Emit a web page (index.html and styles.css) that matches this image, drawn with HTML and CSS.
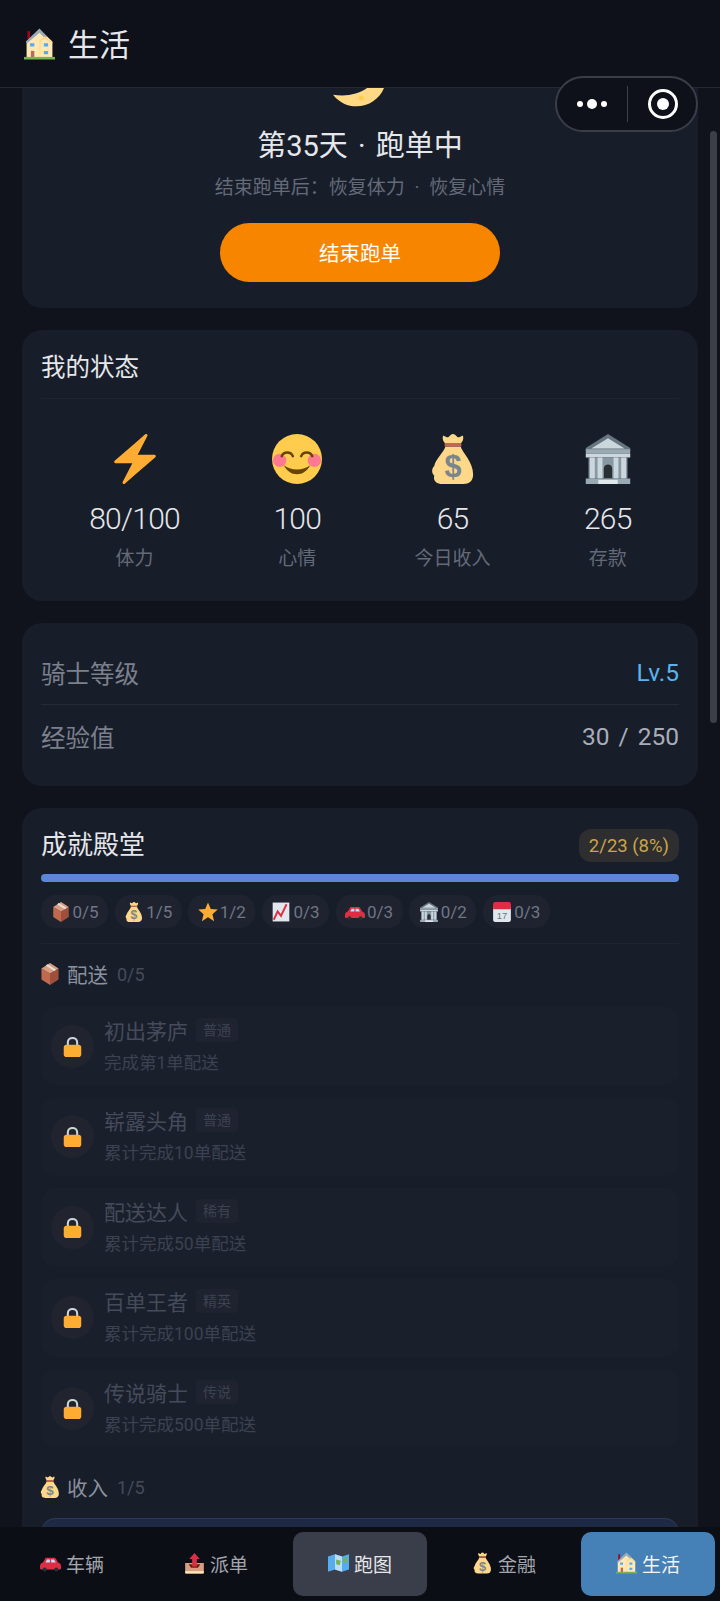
FILE: index.html
```html
<!DOCTYPE html>
<html lang="zh-CN">
<head>
    <meta charset="UTF-8">
    <title>生活</title>
    <link rel="stylesheet" href="styles.css">
</head>
<body>
    <svg class="sprites" xmlns="http://www.w3.org/2000/svg">
        <symbol id="e-house" viewBox="0 0 36 36">
            <path fill="#a0041e" d="M4 3h3v10H4z"/>
            <path fill="#ffe8b6" d="M3 34V15L18 1l15 14v19z"/>
            <path fill="#99aab5" d="M18 0L2 15.500l1.500 1.500L18 5l6 6 3-1z"/>
            <path fill="#ffd983" d="M18 14l6-5 9 7v1.500l-9-5.500-5 4v18h-1z"/>
            <path fill="#55acee" d="M7 17h5v4H7zM23 17h5v4h-5zM23 26h5v4h-5z"/>
            <path fill="#c1694f" d="M8 26h4v8H8z"/>
            <path fill="#77b255" d="M0 33h36v3H0z"/>
        </symbol>
        <symbol id="e-bolt" viewBox="0 0 36 36">
            <path fill="#ffac33" d="M32.938 15.651C32.792 15.260 32.418 15 32 15H19.925L26.891 1.458c.219-.426.106-.947-.271-1.243C26.437.071 26.218 0 26 0c-.233 0-.466.082-.653.243L18 6.588 3.347 19.243c-.316.273-.43.714-.284 1.105S3.582 21 4 21h12.075L9.109 34.542c-.219.426-.106.947.271 1.243.182.144.401.215.62.215.233 0 .466-.082.653-.243L18 29.412l14.653-12.655c.317-.273.43-.714.285-1.106z"/>
        </symbol>
        <symbol id="e-smile" viewBox="0 0 36 36">
            <circle fill="#ffcc4d" cx="18" cy="18" r="18"/>
            <circle fill="#ff7892" cx="5.500" cy="19" r="4.800"/>
            <circle fill="#ff7892" cx="30.500" cy="19" r="4.800"/>
            <path fill="none" stroke="#664500" stroke-width="1.800" stroke-linecap="round" d="M7 16c1.500-3.500 6.500-3.500 8 0M21 16c1.500-3.500 6.500-3.500 8 0"/>
            <path fill="#664500" d="M8.500 22.500c2 4 5.500 6.500 9.500 6.500s7.500-2.500 9.500-6.500c-2.500 2-5.500 3-9.500 3s-7-1-9.500-3z"/>
        </symbol>
        <symbol id="e-bag" viewBox="0 0 36 36">
            <path fill="#fdd888" d="M12.500 9h11c1 4 9 11 9 20 0 5-3 7-7 7h-15c-4 0-7-2-6-6-2-2-2-5 0-7 1-5 7-10 8-14z"/>
            <path fill="#fdd888" d="M11 1c2 1 3 2 4 1s2-2 3-2 2 1 3 2 2 0 4-1c1 2 0 5-2 6H13c-2-1-3-4-2-6z"/>
            <path fill="#bf6952" d="M12 6.500h12v2.500H12z"/>
            <text class="bag-sign" x="18" y="31" text-anchor="middle">$</text>
        </symbol>
        <symbol id="e-bank" viewBox="0 0 36 36">
            <path fill="#66757f" d="M18 0L2 10v2h32v-2z"/>
            <path fill="#ccd6dd" d="M18 3L6 10.500h24z"/>
            <path fill="#99aab5" d="M2 11h32v3H2z"/>
            <path fill="#ccd6dd" d="M2 14h32v3H2z"/>
            <path fill="#8899a6" d="M4 17h28v15H4z"/>
            <path fill="#ccd6dd" d="M5 17h3.500v15H5zM10.500 17H14v15h-3.500zM22 17h3.500v15H22zM27.500 17H31v15h-3.500z"/>
            <path fill="#292f33" d="M15 32v-7c0-4 6-4 6 0v7z"/>
            <path fill="#99aab5" d="M2 32h32v4H2z"/>
            <path fill="#e1e8ed" d="M11 33h14v3H11z"/>
        </symbol>
        <symbol id="e-box" viewBox="0 0 36 36">
            <path fill="#c1694f" d="M4 9l14 8v19L4 27z"/>
            <path fill="#a0503a" d="M32 9v18l-14 9V17z"/>
            <path fill="#d99e82" d="M18 0l14 9-14 8L4 9z"/>
            <path fill="#e6e0da" d="M11 4l14 9 3-2-14-9z"/>
        </symbol>
        <symbol id="e-star" viewBox="0 0 36 36">
            <path fill="#ffac33" d="M18 1l5 11.500 12.500 1.200-9.500 8.300 3 12.500L18 27.500 7 34.500l3-12.500L.5 13.700 13 12.500z"/>
        </symbol>
        <symbol id="e-chart" viewBox="0 0 36 36">
            <path fill="#e1e8ed" d="M3 1h30v34H3z"/>
            <path fill="none" stroke="#dd2e44" stroke-width="3.500" d="M5 32l7-15 6 8 10-21"/>
        </symbol>
        <symbol id="e-car" viewBox="0 0 36 36">
            <path fill="#dd2e44" d="M11 9h13c2 0 3 1 4 3l3 5c3 1 5 3 5 6v4c0 1-1 2-2 2H2c-1 0-2-1-2-2v-4c0-3 2-5 5-6l3-5c1-2 1-3 3-3z"/>
            <path fill="#bbddf5" d="M12 12h5v5H9.500zM19 12h5l3 5h-8z"/>
            <circle fill="#292f33" cx="8" cy="29" r="3.500"/>
            <circle fill="#292f33" cx="28" cy="29" r="3.500"/>
        </symbol>
        <symbol id="e-cal" viewBox="0 0 36 36">
            <path fill="#e1e8ed" d="M2 8h32v24c0 2-1 4-4 4H6c-3 0-4-2-4-4z"/>
            <path fill="#dd2e44" d="M6 0h24c3 0 4 2 4 4v9H2V4c0-2 1-4 4-4z"/>
            <text class="cal-day" x="18" y="31" text-anchor="middle">17</text>
        </symbol>
        <symbol id="e-lock" viewBox="0 0 36 36">
            <path fill="none" stroke="#ccd6dd" stroke-width="3.500" d="M10 17V11c0-10 16-10 16 0v6"/>
            <path fill="#ffac33" d="M7 15h22c2 0 4 2 4 4v13c0 2-2 4-4 4H7c-2 0-4-2-4-4V19c0-2 2-4 4-4z"/>
        </symbol>
        <symbol id="e-out" viewBox="0 0 36 36">
            <path fill="#d99e82" d="M2 18h32v14c0 2-1 4-4 4H6c-3 0-4-2-4-4z"/>
            <path fill="#ffe8b6" d="M2 32h32v4H2z"/>
            <path fill="#662113" d="M8 20h20l-4 6H12z"/>
            <path fill="#dd2e44" d="M18 1l9 10h-5v13h-8V11H9z"/>
        </symbol>
        <symbol id="e-map" viewBox="0 0 36 36">
            <path fill="#55acee" d="M0 7l12-4 12 4 12-4v26l-12 4-12-4-12 4z"/>
            <path fill="#bbddf5" d="M12 3l12 4v26l-12-4z"/>
            <path fill="#77b255" d="M14 12l8 2-2 8-6-2zM26 10l7-2v8l-6 3z"/>
        </symbol>
    </svg>

    <div class="app">
        <header class="topbar">
            <svg class="topbar-icon"><use href="#e-house"/></svg>
            <span class="topbar-title">生活</span>
        </header>

        <div class="capsule">
            <div class="capsule-more"><i></i><i class="big"></i><i></i></div>
            <div class="capsule-line"></div>
            <div class="capsule-target"><i></i></div>
        </div>

        <main class="scroller">
            <div class="scrollbar"></div>
            <div class="content">
                <section class="card day-card">
                    <svg class="moon" viewBox="0 0 36 36">
                        <path fill="#ffd983" d="M33 1c2 18-12 30-30 27 4 5 9 7 14 7 10 0 18-8 18-18 0-6-1-12-2-16z"/>
                        <circle fill="#ffcc4d" cx="20" cy="30" r="1.500"/>
                    </svg>
                    <h2 class="day-title">第35天 · 跑单中</h2>
                    <p class="day-note">结束跑单后：恢复体力 · 恢复心情</p>
                    <button class="end-btn">结束跑单</button>
                </section>

                <section class="card status-card">
                    <h3 class="status-title">我的状态</h3>
                    <div class="stats">
                        <div class="stat">
                            <svg class="stat-icon"><use href="#e-bolt"/></svg>
                            <div class="stat-value">80/100</div>
                            <div class="stat-label">体力</div>
                        </div>
                        <div class="stat">
                            <svg class="stat-icon"><use href="#e-smile"/></svg>
                            <div class="stat-value">100</div>
                            <div class="stat-label">心情</div>
                        </div>
                        <div class="stat">
                            <svg class="stat-icon"><use href="#e-bag"/></svg>
                            <div class="stat-value">65</div>
                            <div class="stat-label">今日收入</div>
                        </div>
                        <div class="stat">
                            <svg class="stat-icon"><use href="#e-bank"/></svg>
                            <div class="stat-value">265</div>
                            <div class="stat-label">存款</div>
                        </div>
                    </div>
                </section>

                <section class="card level-card">
                    <div class="level-row">
                        <span>骑士等级</span>
                        <span class="level-num">Lv.5</span>
                    </div>
                    <div class="level-row">
                        <span>经验值</span>
                        <span class="level-exp">30 / 250</span>
                    </div>
                </section>

                <section class="card hall-card">
                    <div class="hall-head">
                        <h3 class="hall-title">成就殿堂</h3>
                        <span class="hall-badge">2/23 (8%)</span>
                    </div>
                    <div class="hall-bar"></div>
                    <div class="chips">
                        <span class="chip"><svg><use href="#e-box"/></svg>0/5</span>
                        <span class="chip"><svg><use href="#e-bag"/></svg>1/5</span>
                        <span class="chip"><svg><use href="#e-star"/></svg>1/2</span>
                        <span class="chip"><svg><use href="#e-chart"/></svg>0/3</span>
                        <span class="chip"><svg><use href="#e-car"/></svg>0/3</span>
                        <span class="chip"><svg><use href="#e-bank"/></svg>0/2</span>
                        <span class="chip"><svg><use href="#e-cal"/></svg>0/3</span>
                    </div>

                    <div class="group-head">
                        <svg><use href="#e-box"/></svg>
                        <span class="group-name">配送</span>
                        <span class="group-count">0/5</span>
                    </div>
                    <div class="items">
                        <div class="item">
                            <div class="item-lock"><svg><use href="#e-lock"/></svg></div>
                            <div class="item-body">
                                <div class="item-top"><span class="item-name">初出茅庐</span><span class="item-tag">普通</span></div>
                                <div class="item-desc">完成第1单配送</div>
                            </div>
                        </div>
                        <div class="item">
                            <div class="item-lock"><svg><use href="#e-lock"/></svg></div>
                            <div class="item-body">
                                <div class="item-top"><span class="item-name">崭露头角</span><span class="item-tag">普通</span></div>
                                <div class="item-desc">累计完成10单配送</div>
                            </div>
                        </div>
                        <div class="item">
                            <div class="item-lock"><svg><use href="#e-lock"/></svg></div>
                            <div class="item-body">
                                <div class="item-top"><span class="item-name">配送达人</span><span class="item-tag">稀有</span></div>
                                <div class="item-desc">累计完成50单配送</div>
                            </div>
                        </div>
                        <div class="item">
                            <div class="item-lock"><svg><use href="#e-lock"/></svg></div>
                            <div class="item-body">
                                <div class="item-top"><span class="item-name">百单王者</span><span class="item-tag">精英</span></div>
                                <div class="item-desc">累计完成100单配送</div>
                            </div>
                        </div>
                        <div class="item">
                            <div class="item-lock"><svg><use href="#e-lock"/></svg></div>
                            <div class="item-body">
                                <div class="item-top"><span class="item-name">传说骑士</span><span class="item-tag">传说</span></div>
                                <div class="item-desc">累计完成500单配送</div>
                            </div>
                        </div>
                    </div>

                    <div class="group-head income-head">
                        <svg><use href="#e-bag"/></svg>
                        <span class="group-name">收入</span>
                        <span class="group-count">1/5</span>
                    </div>
                    <div class="item item-done"></div>
                </section>
            </div>
        </main>

        <nav class="tabs">
            <div class="tab"><svg><use href="#e-car"/></svg>车辆</div>
            <div class="tab"><svg><use href="#e-out"/></svg>派单</div>
            <div class="tab tab-map"><svg><use href="#e-map"/></svg>跑图</div>
            <div class="tab"><svg><use href="#e-bag"/></svg>金融</div>
            <div class="tab tab-life"><svg><use href="#e-house"/></svg>生活</div>
        </nav>
    </div>
</body>
</html>
```

FILE: styles.css
```css
* {
    box-sizing: border-box;
}
html, body {
    height: 100%;
    margin: 0;
}
body {
    background: #10131c;
    font-family: "Roboto", "Noto Sans CJK SC", sans-serif;
    color: #e5e7eb;
    overflow: hidden;
}
h2, h3, p {
    margin: 0;
    font-weight: 400;
}
.sprites {
    display: none;
}
.bag-sign {
    font: 700 22px "Liberation Sans", sans-serif;
    fill: #7a858e;
}
.cal-day {
    font: 400 17px "Liberation Sans", sans-serif;
    fill: #66757f;
}
.app {
    position: relative;
    display: flex;
    flex-direction: column;
    height: 1601px;
}

/* top bar */
.topbar {
    flex: none;
    display: flex;
    align-items: center;
    gap: 13px;
    height: 88px;
    padding: 0 0 0 24px;
    background: #0f111a;
    border-bottom: 1px solid #262932;
}
.topbar-icon {
    width: 31px;
    height: 32px;
}
.topbar-title {
    padding-bottom: 3px;
    font-size: 31px;
    color: #e5e7eb;
}
.capsule {
    position: absolute;
    top: 76px;
    left: 555px;
    z-index: 5;
    display: flex;
    align-items: center;
    width: 143px;
    height: 56px;
    border: 2px solid #3a3d47;
    border-radius: 28px;
    background: #0f111a;
}
.capsule-more {
    display: flex;
    align-items: center;
    justify-content: center;
    gap: 4px;
    width: 70px;
}
.capsule-more i {
    width: 6px;
    height: 6px;
    border-radius: 50%;
    background: #fff;
}
.capsule-more i.big {
    width: 10px;
    height: 10px;
}
.capsule-line {
    width: 1px;
    height: 36px;
    background: #3f424c;
}
.capsule-target {
    display: flex;
    align-items: center;
    justify-content: center;
    width: 30px;
    height: 30px;
    margin-left: 20px;
    border: 3px solid #fff;
    border-radius: 50%;
}
.capsule-target i {
    width: 12px;
    height: 12px;
    border-radius: 50%;
    background: #fff;
}

/* scrolling part, already scrolled a little */
.scroller {
    position: relative;
    flex: 1;
    min-height: 0;
    overflow: hidden;
}
.scrollbar {
    position: absolute;
    top: 43px;
    right: 3px;
    z-index: 2;
    width: 7px;
    height: 592px;
    border-radius: 4px;
    background: #3a3f4a;
}
.content {
    display: flex;
    flex-direction: column;
    gap: 22px;
    padding: 0 22px;
    margin-top: -60px;
}
.card {
    background: #181d2a;
    border-radius: 20px;
}

/* day card */
.day-card {
    display: flex;
    flex-direction: column;
    align-items: center;
    height: 280px;
}
.moon {
    flex: none;
    width: 60px;
    height: 60px;
    margin: 20px 4px 0 0;
}
.day-title {
    margin-top: 18px;
    font-size: 29px;
    line-height: 40px;
    word-spacing: 3px;
    color: #e5e7eb;
}
.day-note {
    margin-top: 9px;
    font-size: 19px;
    line-height: 26px;
    word-spacing: 5px;
    color: #636a78;
}
.end-btn {
    width: 280px;
    height: 59px;
    margin-top: 22px;
    padding-bottom: 3px;
    border: none;
    border-radius: 30px;
    background: #f78500;
    color: #fff;
    font: inherit;
    font-size: 20.500px;
}

/* status */
.status-card {
    height: 271px;
    padding: 0 19px;
}
.status-title {
    height: 69px;
    border-bottom: 1px solid #20242f;
    font-size: 24.500px;
    line-height: 76px;
    color: #e5e7eb;
}
.stats {
    display: flex;
    justify-content: space-around;
    padding: 35px 0 0 2px;
}
.stat {
    display: flex;
    flex-direction: column;
    align-items: center;
}
.stat-icon {
    width: 50px;
    height: 50px;
}
.stat-value {
    margin-top: 14px;
    font-size: 30px;
    font-weight: 300;
    line-height: 42px;
    letter-spacing: -.7px;
    color: #e5e7eb;
}
.stat-label {
    margin-top: 5px;
    font-size: 19px;
    line-height: 28px;
    color: #636a78;
}

/* level */
.level-card {
    height: 163px;
    padding: 18px 19px;
}
.level-row {
    display: flex;
    justify-content: space-between;
    align-items: center;
    height: 63px;
    font-size: 24.500px;
    color: #7b808c;
}
.level-row + .level-row {
    border-top: 1px solid #252a36;
}
.level-num {
    color: #58b4ee;
}
.level-exp {
    word-spacing: 3px;
    color: #a8adb8;
}

/* achievements */
.hall-card {
    height: 800px;
    padding: 21px 19px 0;
}
.hall-head {
    display: flex;
    justify-content: space-between;
    align-items: center;
    height: 33px;
}
.hall-title {
    padding-bottom: 6px;
    font-size: 26px;
    color: #e5e7eb;
}
.hall-badge {
    display: flex;
    align-items: center;
    height: 33px;
    padding: 0 10px;
    border-radius: 12px;
    background: #2e2d2f;
    color: #c9a648;
    font-size: 18.500px;
}
.hall-bar {
    height: 8px;
    margin-top: 12px;
    border-radius: 4px;
    background: #5b87d6;
}
.chips {
    display: flex;
    gap: 6.500px;
    margin-top: 13px;
    padding-bottom: 15px;
    border-bottom: 1px solid #1f2430;
}
.chip {
    display: flex;
    align-items: center;
    gap: 2px;
    height: 33px;
    padding: 0 9.500px;
    border-radius: 15px;
    background: #1f2330;
    color: #6f7685;
    font-size: 17px;
}
.chip svg {
    width: 20px;
    height: 20px;
}
.group-head {
    display: flex;
    align-items: center;
    height: 24px;
    margin-top: 18px;
}
.group-head svg {
    width: 22px;
    height: 22px;
    margin-left: -2px;
}
.group-name {
    margin-left: 6px;
    font-size: 20.500px;
    color: #8a909d;
}
.group-count {
    margin-left: 9px;
    font-size: 18px;
    color: #454b59;
}
.items {
    display: flex;
    flex-direction: column;
    gap: 12.500px;
    margin-top: 21px;
}
.item {
    display: flex;
    align-items: center;
    height: 78px;
    padding-left: 10px;
    border-radius: 14px;
    background: #1a1f2c;
}
.item-lock {
    display: flex;
    align-items: center;
    justify-content: center;
    width: 43px;
    height: 43px;
    border-radius: 50%;
    background: #21242f;
}
.item-lock svg {
    width: 21px;
    height: 21px;
}
.item-body {
    margin-left: 10px;
}
.item-top {
    display: flex;
    align-items: center;
    height: 26px;
}
.item-name {
    font-size: 21px;
    color: #454b5a;
}
.item-tag {
    margin-left: 8px;
    padding: 0 7px;
    border-radius: 4px;
    background: #1f2330;
    color: #3c4250;
    font-size: 14px;
    line-height: 24px;
}
.item-desc {
    margin-top: 8px;
    font-size: 17.500px;
    line-height: 25px;
    color: #3c4250;
}
.income-head {
    margin-top: 28px;
}
.item-done {
    margin-top: 19px;
    border: 1px solid #2b3a5c;
    background: #1e2a45;
}

/* bottom tabs */
.tabs {
    flex: none;
    display: flex;
    gap: 10px;
    height: 74px;
    padding: 5px;
    background: #0c0e15;
}
.tab {
    display: flex;
    align-items: center;
    justify-content: center;
    gap: 5px;
    flex: 1;
    padding-bottom: 2px;
    border-radius: 10px;
    color: #a3a6ad;
    font-size: 19px;
}
.tab svg {
    width: 21px;
    height: 22px;
}
.tab-map {
    background: #3a3d4a;
    color: #e5e7eb;
}
.tab-life {
    background: #4580b6;
    color: #f3f4f6;
}
```
